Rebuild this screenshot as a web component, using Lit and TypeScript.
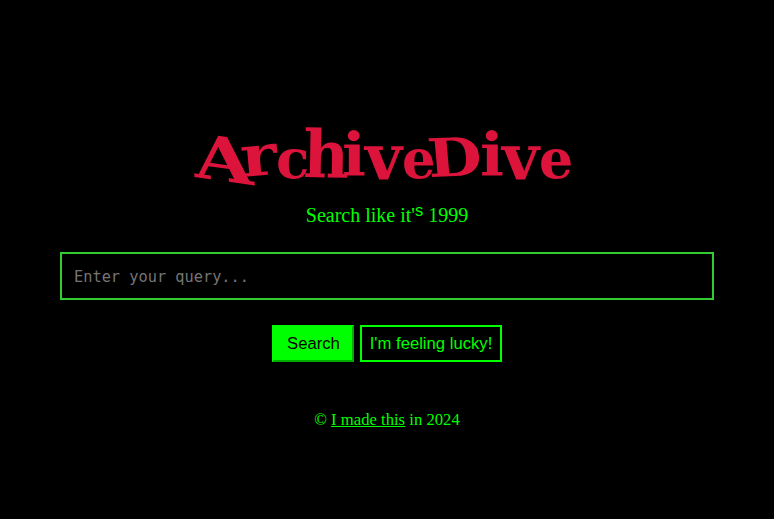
import { LitElement, html, css } from "lit";
import { customElement } from "lit/decorators.js";
import { styleMap } from "lit/directives/style-map.js";

interface Glyph {
  char: string;
  advance: number;
  scaleX: number;
  scaleY: number;
  rise?: number;
  rotate?: number;
  skew?: number;
}

const wordmark: Glyph[] = [
  { char: "A", advance: 47, scaleX: 1.37, scaleY: 1.08, rise: 0, rotate: 8, skew: 10 },
  { char: "r", advance: 34, scaleX: 1.24, scaleY: 1.02, rise: 0, rotate: -5 },
  { char: "c", advance: 27, scaleX: 0.98, scaleY: 0.98, rise: -1 },
  { char: "h", advance: 39, scaleX: 1.12, scaleY: 1.17, rotate: 1 },
  { char: "i", advance: 23, scaleX: 1.13, scaleY: 1.06, rise: 1 },
  { char: "v", advance: 37, scaleX: 1.14, scaleY: 1.12, rise: -2 },
  { char: "e", advance: 27, scaleX: 0.94, scaleY: 0.98, rise: -1 },
  { char: "D", advance: 51, scaleX: 1.12, scaleY: 0.95, rise: 0, rotate: -2, skew: 3 },
  { char: "i", advance: 22, scaleX: 1.13, scaleY: 1.06, rise: 1 },
  { char: "v", advance: 37, scaleX: 1.14, scaleY: 1.12, rise: -2 },
  { char: "e", advance: 33, scaleX: 0.96, scaleY: 0.98, rise: -1 },
];

@customElement("archive-logo")
class ArchiveLogo extends LitElement {
  static styles = css`
    :host { display: block; height: 70px; }
    .wordmark {
      display: flex; margin: 0; height: 70px;
      font: bold 56px/70px "DejaVu Serif", serif; color: #dc143c;
    }
    .glyph { display: block; flex: none; transform-origin: 0 54.7px; }
  `;
  render() {
    return html`<h1 class="wordmark" aria-label="ArchiveDive">${wordmark.map(
      (g) => html`<span class="glyph" style=${styleMap({
        width: `${g.advance}px`,
        transform: `translateY(${-(g.rise ?? 0)}px) rotate(${g.rotate ?? 0}deg) skewX(${g.skew ?? 0}deg) scale(${g.scaleX}, ${g.scaleY})`,
      })}>${g.char}</span>`
    )}</h1>`;
  }
}

@customElement("app-root")
class AppRoot extends LitElement {
  static styles = css`
    :host {
      display: flex; flex-direction: column; align-items: center;
      box-sizing: border-box; height: 519px; padding: 122px 60px 0;
      background: #000; color: #0f0; overflow: hidden;
      font-family: "Liberation Serif", "Times New Roman", serif;
    }
    .logo { padding-right: 7px; }
    .tagline { margin: 11px 0 0; font-size: 20px; line-height: 25px; height: 25px; white-space: nowrap; }
    .raised { font: 16.67px/1 "Liberation Sans", Arial, sans-serif; position: relative; top: -6px; }
    .query {
      box-sizing: border-box; width: 100%; height: 48px; margin: 24px 0 0; padding: 2px 12px 0;
      border: 2px solid limegreen; border-radius: 0; background: #000; color: #0f0; outline: none;
      font: 15.3px "DejaVu Sans Mono", monospace;
    }
    .query::placeholder { color: #757575; opacity: 1; }
    .actions { display: flex; gap: 6px; margin-top: 25px; }
    .button {
      box-sizing: border-box; height: 37px; padding: 0; margin: 0; border-radius: 0;
      font: 16.67px "Liberation Sans", Arial, sans-serif; white-space: nowrap;
    }
    .search { width: 82px; padding-left: 1px; background: #0f0; color: #000; border: 2px outset #0f0; }
    .lucky { width: 142px; background: #000; color: #0f0; border: 2px solid #0f0; }
    .footer { margin: 48px 0 0; font-size: 16.67px; line-height: 20px; white-space: nowrap; }
    .link { color: inherit; }
  `;
  render() {
    return html`
      <archive-logo class="logo"></archive-logo>
      <p class="tagline">Search like it'<span class="raised">s</span> 1999</p>
      <input class="query" type="text" placeholder="Enter your query..." />
      <div class="actions">
        <button class="button search">Search</button>
        <button class="button lucky">I'm feeling lucky!</button>
      </div>
      <p class="footer">© <a class="link" href="#">I made this</a> in 2024</p>
    `;
  }
}
